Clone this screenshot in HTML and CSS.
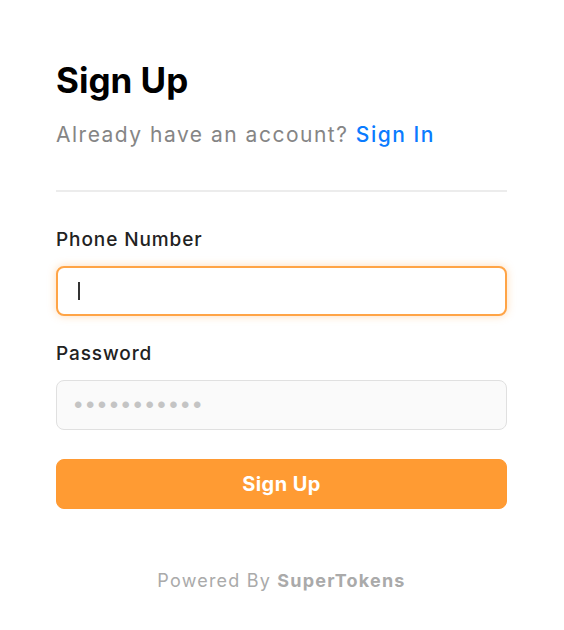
FILE: index.html
```html
<!DOCTYPE html>
<html lang="en">
<head>
    <meta charset="UTF-8">
    <meta name="viewport" content="width=device-width, initial-scale=1.0">
    <title>Sign Up</title>
    <link rel="stylesheet" href="styles.css">
</head>
<body>
    <div class="container">
        <h1 class="title">Sign Up</h1>
        <p class="subtitle">Already have an account? <a class="link" href="#">Sign In</a></p>
        <div class="divider"></div>

        <form class="form">
            <div class="field">
                <label class="label">Phone Number</label>
                <div class="input-box focused"><span class="caret"></span></div>
            </div>
            <div class="field">
                <label class="label">Password</label>
                <div class="input-box filled"><span class="dots">•••••••••••</span></div>
            </div>
            <button class="submit" type="button">Sign Up</button>
        </form>

        <div class="powered">Powered By <b>SuperTokens</b></div>
    </div>
</body>
</html>
```

FILE: styles.css
```css
body {
    margin: 0;
    background-color: #fff;
    font-family: "Inter", "Open Sans", sans-serif;
}

.container {
    width: 451px;
    margin-left: 56px;
    padding-top: 60px;
    display: flex;
    flex-direction: column;
}

.title {
    margin: 0;
    font-size: 35px;
    line-height: 40px;
    font-weight: 700;
    color: #000;
}

.subtitle {
    margin: 21px 0 0 0;
    font-size: 21px;
    line-height: 28px;
    letter-spacing: 1.5px;
    color: #858585;
}

.link {
    color: #0a7bff;
    font-weight: 500;
    text-decoration: none;
}

.divider {
    margin-top: 41px;
    height: 2px;
    background-color: #ececec;
}

.form {
    margin-top: 36px;
    display: flex;
    flex-direction: column;
    gap: 26px;
}

.field {
    display: flex;
    flex-direction: column;
    gap: 14px;
}

.label {
    font-size: 19px;
    line-height: 24px;
    font-weight: 500;
    letter-spacing: 0.9px;
    color: #222;
}

.input-box {
    box-sizing: border-box;
    height: 50px;
    border-radius: 8px;
    border: 1px solid #e0e0e0;
    background-color: #fafafa;
    display: flex;
    align-items: center;
    padding-left: 20px;
}

.input-box.focused {
    background-color: #fff;
    border: 2px solid #ffa446;
    box-shadow: 0 0 8px rgba(255, 155, 51, 0.35);
}

.caret {
    display: inline-block;
    width: 2px;
    height: 18px;
    background-color: #333;
}

.input-box.filled {
    padding-left: 17px;
}

.dots {
    font-family: "Liberation Sans", sans-serif;
    font-size: 24px;
    letter-spacing: 3.5px;
    color: #c4c4c4;
}

.submit {
    margin-top: 3px;
    height: 50px;
    border: 1px solid #ff9a33;
    border-radius: 8px;
    background-color: #ff9b33;
    color: #fff;
    font-family: "Inter", sans-serif;
    font-size: 20px;
    font-weight: 700;
    letter-spacing: 0.4px;
    cursor: pointer;
}

.powered {
    margin-top: 60px;
    text-align: center;
    font-size: 18px;
    line-height: 24px;
    letter-spacing: 1.2px;
    color: #aaa;
}

.powered b {
    font-weight: 700;
}
```
